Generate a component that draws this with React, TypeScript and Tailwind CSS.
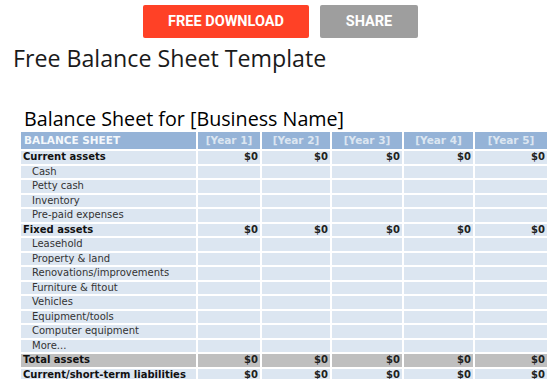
import React from 'react';

type Row = { label: string; kind: 'group' | 'item' | 'total' };

const rows: Row[] = [
  { label: 'Current assets', kind: 'group' },
  { label: 'Cash', kind: 'item' },
  { label: 'Petty cash', kind: 'item' },
  { label: 'Inventory', kind: 'item' },
  { label: 'Pre-paid expenses', kind: 'item' },
  { label: 'Fixed assets', kind: 'group' },
  { label: 'Leasehold', kind: 'item' },
  { label: 'Property & land', kind: 'item' },
  { label: 'Renovations/improvements', kind: 'item' },
  { label: 'Furniture & fitout', kind: 'item' },
  { label: 'Vehicles', kind: 'item' },
  { label: 'Equipment/tools', kind: 'item' },
  { label: 'Computer equipment', kind: 'item' },
  { label: 'More...', kind: 'item' },
  { label: 'Total assets', kind: 'total' },
  { label: 'Current/short-term liabilities', kind: 'group' },
];

const years = ['[Year 1]', '[Year 2]', '[Year 3]', '[Year 4]', '[Year 5]'];
const yearWidths = ['w-[62px]', 'w-[68px]', 'w-[70px]', 'w-[69px]', 'w-[72px]'];

export default function App() {
  return (
    <div className="w-[549px] h-[379px] overflow-hidden bg-white">
      {/* Buttons */}
      <div className="flex gap-[11px] pl-[143px] pt-[5px]">
        <div className="w-[166px] h-[33px] bg-[#ff4126] rounded-[2px] flex items-center justify-center text-white text-[14.5px] font-bold font-['Roboto',sans-serif]">
          FREE DOWNLOAD
        </div>
        <div className="w-[98px] h-[33px] bg-[#9e9e9e] rounded-[2px] flex items-center justify-center text-white text-[14.5px] font-bold font-['Roboto',sans-serif]">
          SHARE
        </div>
      </div>

      <h1 className="pl-[13px] mt-[5px] text-[23.2px] leading-[30px] text-[#1a1a1a] font-['Open_Sans',sans-serif]">
        Free Balance Sheet Template
      </h1>

      <div className="mt-[35px] pl-[24px] text-[19.7px] leading-[22px] text-black font-['Open_Sans',sans-serif]">
        Balance Sheet for [Business Name]
      </div>

      <table className="ml-[19px] mt-[0px] border-separate border-spacing-[2px] font-['DejaVu_Sans',sans-serif] text-[10px]">
        <thead>
          <tr className="h-[17px]">
            <th className="w-[175px] bg-[#95b3d7] text-left pl-[3px] font-bold text-[#f4f8fc] text-[10.5px] leading-none">
              BALANCE SHEET
            </th>
            {years.map((y, i) => (
              <th
                key={y}
                className={`${yearWidths[i]} bg-[#95b3d7] text-center font-bold text-[#dce6f1] text-[10.5px] leading-none`}
              >
                {y}
              </th>
            ))}
          </tr>
        </thead>
        <tbody>
          {rows.map((r) => {
            const bg = r.kind === 'total' ? 'bg-[#bfbfbf]' : 'bg-[#dce6f1]';
            const bold = r.kind !== 'item';
            return (
              <tr key={r.label} className="h-[12.5px]">
                <td
                  className={`${bg} leading-[12px] whitespace-nowrap p-0 ${
                    bold ? 'pl-[2px] font-bold text-[#111]' : 'pl-[11px] text-[#333]'
                  }`}
                >
                  {r.label}
                </td>
                {years.map((y) => (
                  <td key={y} className={`${bg} text-right pr-[2px] p-0 leading-[12px] font-bold text-[#222]`}>
                    {bold ? '$0' : ''}
                  </td>
                ))}
              </tr>
            );
          })}
        </tbody>
      </table>
    </div>
  );
}
